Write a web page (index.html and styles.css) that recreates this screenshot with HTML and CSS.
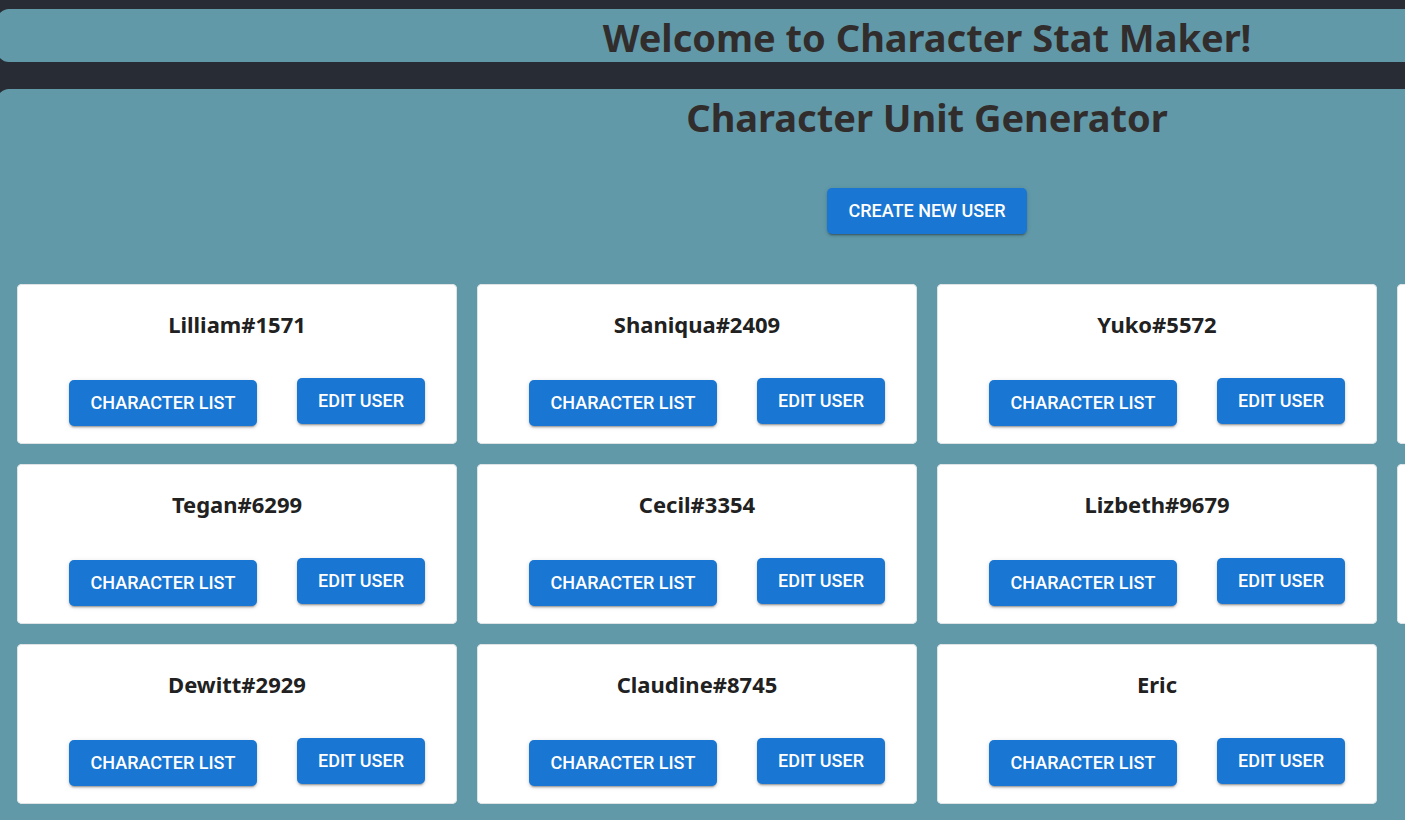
FILE: index.html
```html
<!DOCTYPE html>
<html lang="en">
<head>
<meta charset="utf-8">
<title>Character Stat Maker</title>
<link rel="stylesheet" href="styles.css">
</head>
<body>
<div class="page">
  <header class="panel">
    <h1 class="title">Welcome to Character Stat Maker!</h1>
  </header>
  <main class="panel panel-main">
    <h2 class="title">Character Unit Generator</h2>
    <button type="button" class="btn create">Create New User</button>
    <div class="grid" id="users"></div>
  </main>
</div>
<script src="users.js"></script>
</body>
</html>
```
FILE: styles.css
```css
* {
  box-sizing: border-box;
}

body {
  margin: 0;
  overflow-x: hidden;
  background: #282c34;
  font-family: "Noto Sans", "Open Sans", sans-serif;
}

.page {
  display: flex;
  flex-direction: column;
  gap: 27px;
  width: max-content;
  min-width: 100%;
  min-height: 100vh;
  margin-left: -3px;
  padding-top: 9px;
}

.panel {
  background: #6199a8;
  border-radius: 12px;
}

.panel-main {
  display: flex;
  flex: 1;
  flex-direction: column;
  align-items: center;
  padding: 0 20px 40px;
}

.title {
  margin: 0;
  padding-top: 3px;
  color: #312d2d;
  font-size: 38px;
  font-weight: 700;
  line-height: 50px;
  text-align: center;
}

.btn {
  height: 46px;
  padding: 0 20px 2px;
  border: 0;
  border-radius: 5px;
  background: #1976d2;
  box-shadow: 0 3px 1px -2px rgba(0, 0, 0, 0.2), 0 2px 2px rgba(0, 0, 0, 0.14), 0 1px 5px rgba(0, 0, 0, 0.12);
  color: #fff;
  font-family: Roboto, sans-serif;
  font-size: 18px;
  font-weight: 500;
  text-transform: uppercase;
  white-space: nowrap;
  cursor: pointer;
}

.create {
  min-width: 200px;
  margin: 46px 0 50px;
}

.grid {
  display: grid;
  grid-template-columns: repeat(4, 440px);
  gap: 20px;
}

.card {
  display: flex;
  flex-direction: column;
  justify-content: space-between;
  min-height: 160px;
  padding: 24px 32px 18px;
  border-radius: 5px;
  background: #fff;
  box-shadow: inset 0 0 0 1px #dfe3e5;
}

.name {
  margin: 0;
  color: #212121;
  font-size: 22px;
  font-weight: 700;
  line-height: 32px;
  text-align: center;
}

.actions {
  display: flex;
  justify-content: flex-end;
  align-items: flex-start;
  gap: 40px;
}

.list {
  min-width: 188px;
  margin-top: 2px;
}

.edit {
  min-width: 128px;
}
```
FILE: users.js
```js
const users = [
  "Lilliam#1571", "Shaniqua#2409", "Yuko#5572", "",
  "Tegan#6299", "Cecil#3354", "Lizbeth#9679", "",
  "Dewitt#2929", "Claudine#8745", "Eric"
];

document.getElementById("users").innerHTML = users.map(name => name ? `
  <article class="card">
    <h3 class="name">${name}</h3>
    <div class="actions">
      <button type="button" class="btn list">Character List</button>
      <button type="button" class="btn edit">Edit User</button>
    </div>
  </article>` : `<article class="card"></article>`).join("");
```
